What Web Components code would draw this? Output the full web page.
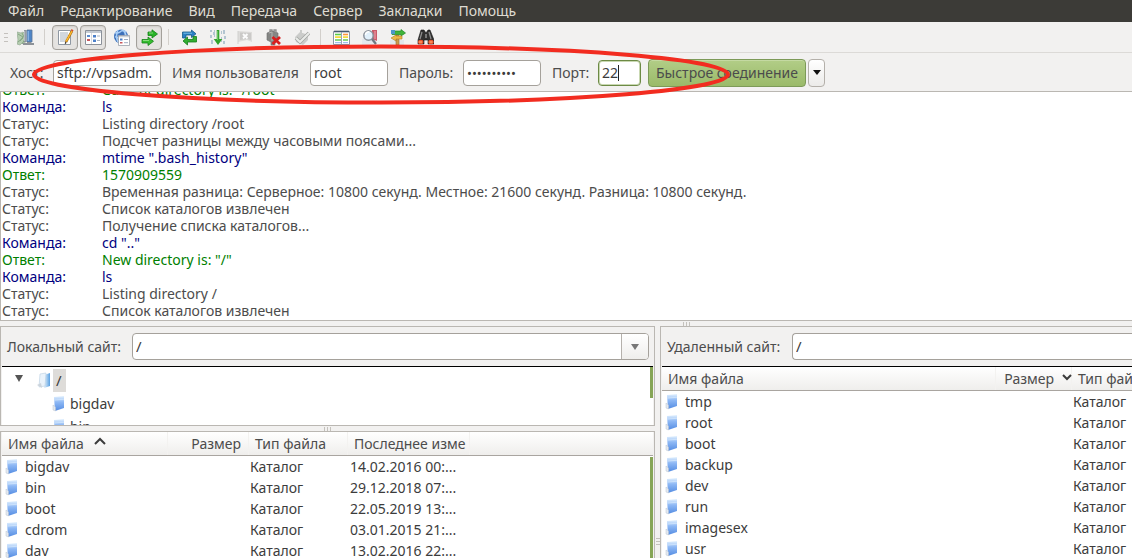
<!DOCTYPE html>
<html lang="ru">
<head>
<meta charset="utf-8">
<title>FileZilla</title>
<style>
html, body { margin: 0; height: 100%; overflow: hidden; }
body { font: 14px/17px "Noto Sans", "Open Sans", sans-serif; color: #4c4c4c; background: #f2f1f0; }
</style>
</head>
<body>
<fz-app></fz-app>
<script>
const define = (name, html, setup) => {
  const template = document.createElement('template');
  template.innerHTML = '<style>*{box-sizing:border-box}:host([hidden]){display:none}</style>' + html;
  customElements.define(name, class extends HTMLElement {
    connectedCallback() {
      if (this.shadowRoot) return;
      const root = this.attachShadow({ mode: 'open' });
      root.append(template.content.cloneNode(true));
      if (setup) setup.call(this, root);
    }
  });
};

const ICONS = {
  site: `<path d="M0 3l4 1 2-1 2 2v10l-3-1-2 2-3-1 1-4z" fill="#b5cdb0" stroke="#94ab92" stroke-width=".7"/><path d="M1 5l5 3-3 4M5 4l3 6-3 5M1 13l5-4" stroke="#80a07e" stroke-width=".9" fill="none"/><path d="M7 1h2.500v12H7z" fill="#8d959e"/><path d="M7.700 2v10" stroke="#d3d9df" stroke-width=".7"/><path d="M10 1h5v12h-5z" fill="#4f86c8" stroke="#5c7394" stroke-width=".8"/><path d="M11.200 2v10" stroke="#9cc4ef"/><path d="M6 16v-2h4v-1h4v1h3v2z" fill="#8d9298"/>`,
  log: `<path d="M1.500 1.500h12v14h-12z" fill="#fff" stroke="#8f98a3"/><path d="M3 4h8M3 6h8M3 8h7M3 10h6M3 12h5" stroke="#9aa7b8" stroke-width=".9"/><path d="M15 2L9 13" stroke="#a26a12" stroke-width="2.600"/><path d="M15 2L9.200 12.400" stroke="#ffb92c" stroke-width="1.500"/><path d="M7.800 15.500l.2-2.800 1.800 1z" fill="#40372b"/><path d="M14.500 0l2 1.200-.7 1.400-2-1.200z" fill="#ce4d2c"/>`,
  tree: `<path d="M.5 1.500h16v14H.5z" fill="#fff" stroke="#8a9099"/><path d="M1 2h15v2H1z" fill="#c5cbd3"/><path d="M6.500 4v11" stroke="#c8ccd3" stroke-width=".7"/><path d="M8 6h3v2.500H8zM8 10.500h3V13H8z" fill="#4c80ca"/><path d="M2 6h3v2H2z" fill="#5a8bd0"/><path d="M2 10h3v2H2z" fill="#c8575b"/><path d="M12 7h3M12 11.500h3" stroke="#a9b3c0"/>`,
  globe: `<circle cx="8" cy="7.500" r="7" fill="#3c70ba"/><path d="M2 4c2-1 3 1 5-1s4-2 6 0M2 8c2-1 3 2 5 1M5 1c-2 4-2 8 0 12M10 1c2 2 3 4 3 7" stroke="#a8cdf5" stroke-width="1.600" fill="none"/><path d="M5.500 6.500h11v10h-11z" fill="#fff" stroke="#9aa0a9" stroke-width=".8"/><path d="M6 7h10v1.300H6z" fill="#ccd2d9"/><path d="M7 9.500h2.500v2H7z" fill="#4c80ca"/><path d="M7 13h2.500v1.500H7z" fill="#c8575b"/><path d="M11 10.500h4M11 13.700h4" stroke="#9eacc0"/>`,
  queue: `<path d="M7 3h4V.8L16.500 5 11 9V6.500H7z" fill="#27b327" stroke="#148117" stroke-width=".8"/><path d="M1 10.500h6V8l5.500 4.300L7 16.500V14H1z" fill="#36bd30" stroke="#148117" stroke-width=".8"/><path d="M8 4h4M2 11.500h6" stroke="#9ce590" stroke-width=".8"/>`,
  refresh: `<path d="M1.500 9V3h9V1L15 4.800 10.500 8.500V6H5v3z" fill="#2a80c5" stroke="#155988" stroke-width=".8"/><path d="M15.500 7.500V13h-9v3L2 12l4.500-4v2.500H12v-3z" fill="#32ae32" stroke="#147c1d" stroke-width=".8"/><path d="M2.500 4.200h8.500" stroke="#98d5f7" stroke-width=".7"/>`,
  process: `<path d="M1 1h2v2H1zM4 3h1v3H4zM1 6h2v3H1zM2 11h2v4H2zM14 1h2v4h-2zM15 7h2v3h-2zM14 12h2v3h-2zM12 2h1v3h-1zM5 1h1v7H5zM12 8h1v5h-1z" fill="#b3c5d1"/><path d="M7.700 1h2.600v9h3L9 16l-4.300-6h3z" fill="#32a32c"/><path d="M8.600 2v9" stroke="#91db87" stroke-width=".7"/>`,
  cancel: `<path d="M1 2l14 1v10l-5-2-9 2z" fill="#dddcda"/><path d="M3 3.500l11 .5v7l-4-1-7 1z" fill="#cbcac8"/><path d="M6 5l4.500 4.500M10.500 5L6 9.500" stroke="#fcfcfc" stroke-width="2"/><path d="M1 2v13" stroke="#d1d0ce"/>`,
  disconnect: `<path d="M5 3V1h2v2M9 3V1h2v2" stroke="#8c8c8c" stroke-width="1.300" fill="none"/><path d="M2 4l5-2 6 2v6l-3 3v3H6v-3L2 11z" fill="#858684" stroke="#6c6d6b" stroke-width=".6"/><path d="M4 4l3-1v9" stroke="#b4b5b3" fill="none"/><path d="M7.500 8l7.500 7M15 8l-7.500 7" stroke="#d91e1e" stroke-width="2.800"/>`,
  reconnect: `<path d="M7 1h2v3H7zM2 8l5-5 8 3v5l-5 5-7-3z" fill="#cbccca"/><path d="M3 9l4 4L16 4" stroke="#a1a3a0" stroke-width="3.600" fill="none"/><path d="M3 9l4 4L16 4" stroke="#e9ebe8" stroke-width="2.200" fill="none"/>`,
  filter: `<path d="M.5 2.500h16v13H.5z" fill="#fff" stroke="#8b96a5"/><path d="M1 2.500h15" stroke="#465a70" stroke-width="1.600"/><path d="M2 5.500h6" stroke="#5acb48" stroke-width="1.600"/><path d="M2 8.200h6M10 8.200h5" stroke="#f4dc3c" stroke-width="1.700"/><path d="M10 5.500h5" stroke="#ff973b" stroke-width="1.600"/><path d="M2 11h6M10 11h5" stroke="#65c95b" stroke-width="1.500"/><path d="M2 13.700h6M10 13.700h5" stroke="#88afea"/><path d="M8.500 3v12" stroke="#9ba5b4"/>`,
  search: `<path d="M1 10h13v6H1z" fill="#e4e8ed"/><path d="M11 1h5v11l-5-2z" fill="#ca5b6a"/><path d="M14 2v8" stroke="#f3a8af"/><circle cx="7.500" cy="6.500" r="4.700" fill="#e1f0fb" stroke="#8b929b" stroke-width="1.500"/><path d="M4.500 6a3 3 0 0 1 4-3" stroke="#fff" stroke-width="1.500" fill="none"/><path d="M11 10l4 5" stroke="#727781" stroke-width="2.300"/>`,
  sync: `<path d="M1 11h14v5H1z" fill="#e2e7ec"/><path d="M7 6h3v10H7z" fill="#ca994c" stroke="#99703a" stroke-width=".6"/><path d="M3 2h9V.5L16.500 4 12 7V5.500H3z" fill="#40b43a" stroke="#1f8827" stroke-width=".7"/><path d="M13 7H7v-1L2 9l5 3v-2h6z" fill="#eeb846" stroke="#af7d25" stroke-width=".6"/><path d="M2 1h4v4H2z" fill="#4e96c9"/>`,
  find: `<path d="M4 1h3l2 3 2-3h2l4 10v4h-6v-4H7v4H1v-4z" fill="#30302f" stroke="#151515" stroke-width=".6"/><path d="M5 3l-2 7M12 3l2 7" stroke="#8c8c8c" stroke-width="1.300"/><path d="M8 5h2v4H8z" fill="#777"/><ellipse cx="3.700" cy="13" rx="2.700" ry="2.200" fill="#ed542c"/><ellipse cx="14" cy="13" rx="2.700" ry="2.200" fill="#ed542c"/><path d="M2 13h3M12.500 13h3" stroke="#ffbd80"/>`,
  folder: `<defs><linearGradient id="g" x2="0" y2="1"><stop stop-color="#e4f2fe"/><stop offset=".4" stop-color="#8fb9f5"/><stop offset="1" stop-color="#548ce2"/></linearGradient></defs><path d="M3 2l10-1v12L4 16z" fill="url(#g)"/><path d="M3.500 5l9.500-.7" stroke="#d3e7fd" stroke-width=".8"/><path d="M2 10l2.500 2v4L2 15z" fill="#e5e9ef" stroke="#bac4d0" stroke-width=".5"/>`,
  open: `<defs><linearGradient id="g"><stop stop-color="#e6f2fc"/><stop offset="1" stop-color="#5aa0e1"/></linearGradient></defs><path d="M8 3l6-2v13l-6 2z" fill="url(#g)"/><path d="M4 2l6-1-1 13-6 1z" fill="#eaf3fb" stroke="#b8cfe2" stroke-width=".6"/><path d="M1 13l4-2 1 5z" fill="#ccd4dc"/>`
};
define('fz-icon', `<style>:host{display:inline-block;width:17px;height:17px;flex:none}svg{display:block;width:100%;height:100%}</style><svg viewBox="0 0 17 17" aria-hidden="true"></svg>`, function (root) {
  root.querySelector('svg').innerHTML = ICONS[this.getAttribute('name')];
});

define('fz-menu', `<style>
:host{display:block;background:#3c3b37;color:#dfdbd2}
nav{display:flex;height:22px;align-items:center;padding:0 8px 2px;gap:16px}
a{color:inherit;text-decoration:none;white-space:nowrap}
</style><nav><a href="#">Файл</a><a href="#">Редактирование</a><a href="#">Вид</a><a href="#">Передача</a><a href="#">Сервер</a><a href="#">Закладки</a><a href="#">Помощь</a></nav>`);

define('fz-tool', `<style>
:host{display:block}
button{display:grid;place-items:center;width:26px;height:25px;padding:0;border:1px solid transparent;border-radius:4px;background:none}
button[aria-pressed=true]{border-color:#a3a09b;background:#e5e3e1;box-shadow:inset 0 1px 2px #cfccc8}
</style><button type="button"></button>`, function (root) {
  const b = root.querySelector('button');
  b.innerHTML = `<fz-icon name="${this.getAttribute('icon')}"></fz-icon>`;
  b.setAttribute('aria-label', this.getAttribute('hint'));
  if (this.hasAttribute('pressed')) b.setAttribute('aria-pressed', 'true');
});

define('fz-toolbar', `<style>
:host{display:flex;height:30px;align-items:center;gap:2px;padding-left:4px;background:#f2f1f0}
i{width:10px;height:16px;background:linear-gradient(#d2cfcb,#d2cfcb) 4px 0/1px 100% no-repeat}
.grip{width:6px;height:9px;background:repeating-linear-gradient(#c4c1bd 0 1px,transparent 1px 4px) 0 0/4px 100% no-repeat}
</style><span class="grip"></span>
<fz-tool icon="site" hint="Менеджер сайтов"></fz-tool><i></i>
<fz-tool icon="log" hint="Лог" pressed></fz-tool><fz-tool icon="tree" hint="Локальное дерево" pressed></fz-tool><fz-tool icon="globe" hint="Удаленное дерево"></fz-tool><fz-tool icon="queue" hint="Очередь" pressed></fz-tool><i></i>
<fz-tool icon="refresh" hint="Обновить"></fz-tool><fz-tool icon="process" hint="Обработать очередь"></fz-tool><fz-tool icon="cancel" hint="Отмена"></fz-tool><fz-tool icon="disconnect" hint="Отключиться"></fz-tool><fz-tool icon="reconnect" hint="Подключиться"></fz-tool><i></i>
<fz-tool icon="filter" hint="Фильтр"></fz-tool><fz-tool icon="search" hint="Сравнение"></fz-tool><fz-tool icon="sync" hint="Синхронный просмотр"></fz-tool><fz-tool icon="find" hint="Поиск"></fz-tool>`);

define('fz-quick', `<style>
:host{display:block;position:relative;z-index:2;background:#f2f1f0;border-top:1px solid #dcdad7;border-bottom:1px solid #bab7b2}
form{display:flex;height:38px;align-items:center;padding:1px 0 0 10px;margin:0}
label{white-space:nowrap;flex:none}
input{font:inherit;color:#3c3c3c;height:26px;padding:0 3px;margin-right:11px;border:1px solid #a5a19b;border-radius:4px;background:#fff;width:78px;outline:none}
.l1{width:43px}.l2{width:138px}.l3{width:64px}.l4{width:46px}
#host{width:108px}
#pass{font-size:13px}
.port{position:relative;margin-right:7px}
#port{width:43px;margin:0;display:block;border-color:#6d8a45;box-shadow:inset 0 0 0 1px #c9d8b2}
.caret{position:absolute;left:20px;top:5px;width:1px;height:16px;background:#222}
button{font:inherit;color:#4c4c4c;height:28px;padding:0;border:1px solid #7d9a58;border-radius:4px}
.go{width:158px;background:linear-gradient(#b2cd87,#9aba69);box-shadow:inset 0 1px #c4d9a2;margin-right:2px;white-space:nowrap}
.more{width:17px;border-color:#b4b0aa;background:linear-gradient(#fff,#ecebe9);display:grid;place-items:center}
.mark{position:absolute;left:31px;top:-9px;width:700px;height:61px;pointer-events:none}
</style><form>
<label class="l1" for="host">Хост:</label><input id="host" value="sftp://vpsadm.">
<label class="l2" for="user">Имя пользователя</label><input id="user" value="root">
<label class="l3" for="pass">Пароль:</label><input id="pass" type="password" value="abcdefghij">
<label class="l4" for="port">Порт:</label><span class="port"><input id="port" value="22"><span class="caret"></span></span>
<button class="go" type="button">Быстрое соединение</button><button class="more" type="button" aria-label="История"><svg width="8" height="5"><path d="M0 0h8L4 5z" fill="#111"/></svg></button>
</form><svg class="mark" viewBox="0 0 700 61"><ellipse cx="350" cy="30.500" rx="347" ry="28" fill="none" stroke="#f22c20" stroke-width="4"/></svg>`);

define('fz-log', `<style>
:host{display:flex;flex-direction:column;justify-content:flex-end;overflow:hidden;background:#fff;border-left:1px solid #bab7b2;border-bottom:1px solid #bab7b2;padding-bottom:1px}
p{display:grid;grid-template-columns:100px 1fr;margin:0;padding-left:1px;white-space:nowrap;flex:none}
.c{color:#00007f}.r{color:#008000}
</style>`, function (root) {
  const kinds = { s: 'Статус:', c: 'Команда:', r: 'Ответ:' };
  const lines = ['r|Current directory is: "/root"', 'c|ls', 's|Listing directory /root', 's|Подсчет разницы между часовыми поясами...', 'c|mtime ".bash_history"', 'r|1570909559', 's|Временная разница: Серверное: 10800 секунд. Местное: 21600 секунд. Разница: 10800 секунд.', 's|Список каталогов извлечен', 's|Получение списка каталогов...', 'c|cd ".."', 'r|New directory is: "/"', 'c|ls', 's|Listing directory /', 's|Список каталогов извлечен'];
  for (const line of lines) {
    const [k, text] = line.split('|');
    const p = document.createElement('p');
    p.className = k;
    p.innerHTML = '<span></span><span></span>';
    p.firstChild.textContent = kinds[k];
    p.lastChild.textContent = text;
    root.append(p);
  }
});

define('fz-sash', `<style>
:host{display:grid;place-items:center;flex:none;width:100%;height:5px}
:host([vertical]){width:5px;height:auto}
i{width:7px;height:4px;background:repeating-linear-gradient(90deg,#c4c1bc 0 1px,transparent 1px 3px)}
:host([near]) i{justify-self:start;margin-left:683px}
:host([vertical]) i{width:4px;height:7px;align-self:end;margin-bottom:13px;background:repeating-linear-gradient(#c4c1bc 0 1px,transparent 1px 3px)}
</style><i></i>`);

define('fz-address', `<style>
:host{display:block;border-bottom:1px solid #000}
form{display:flex;align-items:center;height:39px;padding:0 4px 0 5px;margin:0;gap:6px}
label{white-space:nowrap;flex:none;width:119px}
.box{display:flex;flex:1;height:27px;border:1px solid #a5a19b;border-radius:4px;overflow:hidden;background:#fff}
input{font:inherit;font-size:15px;color:#3c3c3c;flex:1;min-width:0;border:0;padding:0 3px;background:none;outline:none}
button{width:27px;padding:0;border:0;border-left:1px solid #b5b1ac;background:linear-gradient(#fff,#efeeec);display:grid;place-items:center}
:host([open-end]) button{display:none}
:host([open-end]) form{padding-right:0}
:host([open-end]) .box{border-right:0;border-radius:4px 0 0 4px}
</style><form><label for="path"><slot></slot></label><div class="box"><input id="path" value="/"><button type="button" aria-label="Открыть список"><svg width="8" height="6"><path d="M0 0h8L4 6z" fill="#777"/></svg></button></div></form>`);

define('fz-tree', `<style>
:host{display:block;position:relative;overflow:hidden;background:#fff;color:#3c3c3c}
ul{list-style:none;margin:0;padding:2px 0 0}
li{display:flex;align-items:center;height:23px;padding-left:49px}
li.root{padding-left:13px}
li.root svg{margin-bottom:4px}
li.root fz-icon{margin-left:13px}
li:not(.root) span{margin-left:2px}
.sel{background:#dedcd9;width:13px;height:23px;line-height:23px;padding-left:3px;font-size:15px}
.bar{position:absolute;right:0;top:0;width:3px;height:31px;background:#86a556}
</style><ul><li class="root"><svg width="8" height="7"><path d="M0 0h8L4 7z" fill="#555"/></svg><fz-icon name="open"></fz-icon><span class="sel">/</span></li><li><fz-icon name="folder"></fz-icon><span>bigdav</span></li><li><fz-icon name="folder"></fz-icon><span>bin</span></li></ul><span class="bar"></span>`);

define('fz-files', `<style>
:host{display:block;position:relative;overflow:hidden;background:#fff;color:#3c3c3c}
table{table-layout:fixed;border-collapse:separate;border-spacing:0;width:100%}
th,td{padding:0;font-weight:400;text-align:left;white-space:nowrap;overflow:hidden}
th{height:24px;padding-left:6px;color:#4c4c4c;background:linear-gradient(90deg,#f3f2f0,#f3f2f0) 100% 0/1px 100% no-repeat,linear-gradient(#fff,#efeeec);border-bottom:1px solid #a9a5a0}
th:last-child{background:linear-gradient(#fff,#efeeec)}
th svg{margin-left:10px;vertical-align:4px}
th.size{text-align:right;padding-right:8px}
td{height:21px;padding-left:1px}
td:first-child,td:nth-child(4){padding-left:2px}
.name{display:flex;align-items:center;gap:4px}
.bar{position:absolute;right:0;top:25px;bottom:0;width:3px;background:#86a556}
:host([remote]) .bar{display:none}
:host([remote]) th.size{padding-right:0}
:host([remote]) th.size svg{margin-left:8px;vertical-align:2px}
</style><table><colgroup></colgroup><thead><tr></tr></thead><tbody></tbody></table><span class="bar"></span>`, function (root) {
  const remote = this.hasAttribute('remote');
  const up = '<svg width="12" height="8"><path d="M1 7l5-5 5 5" fill="none" stroke="#3c3c3c" stroke-width="2"/></svg>';
  const down = '<svg width="10" height="8"><path d="M1 1l4 4 4-4" fill="none" stroke="#3c3c3c" stroke-width="2"/></svg>';
  const widths = remote ? [334, 76, 0] : [166, 81, 99, 122, 0];
  root.querySelector('colgroup').innerHTML = widths.map(w => w ? `<col style="width:${w}px">` : '<col>').join('');
  root.querySelector('thead tr').innerHTML = remote
    ? `<th>Имя файла</th><th class="size">Размер${down}</th><th>Тип файла</th>`
    : `<th>Имя файла${up}</th><th class="size">Размер</th><th>Тип файла</th><th>Последнее изме</th><th></th>`;
  const rows = remote
    ? ['tmp', 'root', 'boot', 'backup', 'dev', 'run', 'imagesex', 'usr'].map(n => [n])
    : [['bigdav', '14.02.2016 00:...'], ['bin', '29.12.2018 07:...'], ['boot', '22.05.2019 13:...'], ['cdrom', '03.01.2015 21:...'], ['dav', '13.02.2016 22:...']];
  root.querySelector('tbody').innerHTML = rows.map(([n, d]) =>
    `<tr><td><span class="name"><fz-icon name="folder"></fz-icon>${n}</span></td><td></td><td>Каталог</td>${d ? `<td>${d}</td><td></td>` : ''}</tr>`).join('');
});

define('fz-panel', `<style>
:host{display:flex;flex-direction:column;min-width:0;min-height:0;border:1px solid #bab7b2;padding:0 1px}
</style><slot></slot>`);

define('fz-app', `<style>
:host{display:flex;flex-direction:column;height:100vh;overflow:hidden}
fz-log{flex:227 1 0px;min-height:0}
main{flex:232 1 0px;min-height:0;display:grid;grid-template-columns:minmax(0,655fr) 5px minmax(0,472fr)}
.local{display:flex;flex-direction:column;min-height:0}
fz-panel,fz-log{box-sizing:content-box}
.local fz-panel,fz-panel.remote{margin:0}
.top{flex:98 1 0px}.bottom{flex:126 1 0px;border-bottom:0}
.remote{border-right:0;border-bottom:0;padding-right:0;box-sizing:border-box}
fz-tree,fz-files{flex:1;min-height:0}
</style>
<fz-menu></fz-menu><fz-toolbar></fz-toolbar><fz-quick></fz-quick><fz-log></fz-log><fz-sash near></fz-sash>
<main>
<div class="local"><fz-panel class="top"><fz-address>Локальный сайт:</fz-address><fz-tree></fz-tree></fz-panel><fz-sash></fz-sash><fz-panel class="bottom"><fz-files></fz-files></fz-panel></div>
<fz-sash vertical></fz-sash>
<fz-panel class="remote"><fz-address open-end>Удаленный сайт:</fz-address><fz-files remote></fz-files></fz-panel>
</main>`);
</script>
</body>
</html>
